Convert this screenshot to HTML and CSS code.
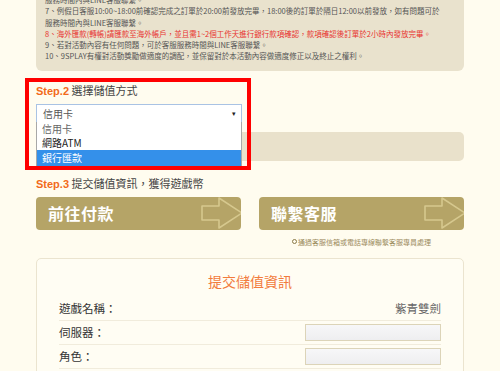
FILE: index.html
```html
<!DOCTYPE html>
<html lang="zh-Hant">
<head>
    <meta charset="UTF-8">
    <meta name="viewport" content="width=device-width, initial-scale=1.0">
    <title>儲值說明</title>
    <link rel="stylesheet" href="styles.css">
</head>
<body>
    <div class="page">
        <div class="notes">
            <div class="line">服務時間內與LINE客服聯繫。</div>
            <div class="line">7、例假日客服10:00~18:00前確認完成之訂單於20:00前發放完畢，18:00後的訂單於隔日12:00以前發放，如有問題可於</div>
            <div class="line">服務時間內與LINE客服聯繫。</div>
            <div class="line red">8、海外匯款(轉帳)請匯款至海外帳戶，並且需1~2個工作天進行銀行款項確認，款項確認後訂單於2小時內發放完畢。</div>
            <div class="line">9、若對活動內容有任何問題，可於客服服務時間與LINE客服聯繫。</div>
            <div class="line">10、9SPLAY有權對活動獎勵做適度的調配，並保留對於本活動內容做適度修正以及終止之權利。</div>
        </div>

        <div class="step step2">
            <div class="step-title"><span class="step-no">Step.2</span> 選擇儲值方式</div>
            <div class="select">
                <span>信用卡</span>
                <span class="caret">▾</span>
            </div>
            <div class="options">
                <div class="option muted">信用卡</div>
                <div class="option">網路ATM</div>
                <div class="option selected">銀行匯款</div>
            </div>
            <div class="info-bar"></div>
            <div class="highlight"></div>
        </div>

        <div class="step step3">
            <div class="step-title"><span class="step-no">Step.3</span> 提交儲值資訊，獲得遊戲幣</div>
            <div class="actions">
                <div class="action">
                    <div class="action-btn">
                        <span>前往付款</span>
                        <svg class="arrow" width="44" height="34" viewBox="0 0 44 34">
                            <path d="M2 10 H19 V2 L42 17 L19 32 V24 H2 Z" fill="none" stroke="#d6c88e" stroke-width="1.6" stroke-linejoin="round"/>
                        </svg>
                    </div>
                </div>
                <div class="action">
                    <div class="action-btn">
                        <span>聯繫客服</span>
                        <svg class="arrow" width="44" height="34" viewBox="0 0 44 34">
                            <path d="M2 10 H19 V2 L42 17 L19 32 V24 H2 Z" fill="none" stroke="#d6c88e" stroke-width="1.6" stroke-linejoin="round"/>
                        </svg>
                    </div>
                    <div class="action-note"><span class="ring"></span>通過客服信箱或電話專線聯繫客服專員處理</div>
                </div>
            </div>
        </div>

        <div class="form-box">
            <div class="form-title">提交儲值資訊</div>
            <div class="form-row">
                <span class="label">遊戲名稱：</span>
                <span class="value">紫青雙劍</span>
            </div>
            <div class="form-row">
                <span class="label">伺服器：</span>
                <span class="input"></span>
            </div>
            <div class="form-row">
                <span class="label">角色：</span>
                <span class="input"></span>
            </div>
        </div>
    </div>
</body>
</html>
```

FILE: styles.css
```css
body {
    margin: 0;
    background-color: #fffcef;
    font-family: "Noto Sans CJK TC", "Liberation Sans", sans-serif;
    color: #444;
    overflow: hidden;
}
.page {
    padding: 0 36px;
}

/* notes box at the top */
.notes {
    margin-top: -6px;
    padding: 0 9px 9px;
    background-color: #e9e2cd;
    border-radius: 0 0 6px 6px;
    font-size: 7.5px;
    line-height: 11.3px;
    color: #555;
    white-space: nowrap;
}
.notes .red {
    color: #e8322f;
}

/* steps */
.step-title {
    font-size: 11px;
    line-height: 14px;
    color: #444;
}
.step-no {
    font-family: "Liberation Sans", sans-serif;
    font-weight: bold;
    color: #f26a1b;
}
.step2 {
    position: relative;
    margin-top: 12px;
}
.select {
    display: flex;
    justify-content: space-between;
    align-items: center;
    width: 206px;
    height: 19px;
    margin-top: 6px;
    padding: 0 5px 0 6px;
    box-sizing: border-box;
    border: 1px solid #a9c3e4;
    background: #fff;
    font-size: 10px;
    color: #555;
}
.caret {
    font-size: 7px;
    color: #222;
}
.options {
    position: absolute;
    top: 39px;
    left: 0;
    width: 206px;
    box-sizing: border-box;
    border: 1px solid #a8a8a8;
    border-top: none;
    background: #fff;
    z-index: 2;
}
.option {
    height: 14px;
    line-height: 14px;
    padding-left: 5px;
    font-size: 10px;
    color: #222;
}
.option.muted {
    color: #666;
}
.option.selected {
    height: 16px;
    line-height: 16px;
    background-color: #3490ea;
    color: #fff;
}
.info-bar {
    height: 29px;
    margin-top: 9px;
    background-color: #e9e1cb;
    border-radius: 5px;
}
.highlight {
    position: absolute;
    top: -5px;
    left: -11px;
    width: 226px;
    height: 92px;
    box-sizing: border-box;
    border: 4px solid #ff0000;
    z-index: 3;
}

.step3 {
    margin-top: 15px;
}
.actions {
    display: flex;
    gap: 18px;
    margin-top: 6px;
}
.action {
    flex: 1;
}
.action-btn {
    display: flex;
    justify-content: space-between;
    align-items: center;
    height: 33px;
    padding-left: 12px;
    background-color: #b5a467;
    border-radius: 4px;
    overflow: hidden;
    color: #fff;
    font-size: 16px;
    font-weight: bold;
    letter-spacing: 0.5px;
}
.arrow {
    display: block;
    margin-right: -3px;
}
.action-note {
    display: flex;
    justify-content: center;
    align-items: center;
    gap: 1px;
    margin-top: 7px;
    font-size: 7px;
    line-height: 10px;
    color: #9a8a5c;
}
.ring {
    width: 3px;
    height: 3px;
    border: 1px solid #8a7a48;
    border-radius: 50%;
}

/* form */
.form-box {
    margin-top: 11px;
    padding: 0 22px 10px;
    background-color: #fffdf3;
    border: 1px solid #ebe4cf;
    border-radius: 5px;
}
.form-title {
    padding-top: 12px;
    margin-bottom: 6px;
    text-align: center;
    font-size: 14px;
    line-height: 20px;
    color: #f27b3c;
}
.form-row {
    display: flex;
    justify-content: space-between;
    align-items: center;
    height: 23px;
    border-bottom: 1px solid #f1ecdc;
    font-size: 11.5px;
    color: #333;
}
.value {
    color: #666;
}
.input {
    width: 136px;
    height: 17px;
    box-sizing: border-box;
    border: 1px solid #dcd4b8;
    background: linear-gradient(#f7f7f8, #eeeef0);
}
```
